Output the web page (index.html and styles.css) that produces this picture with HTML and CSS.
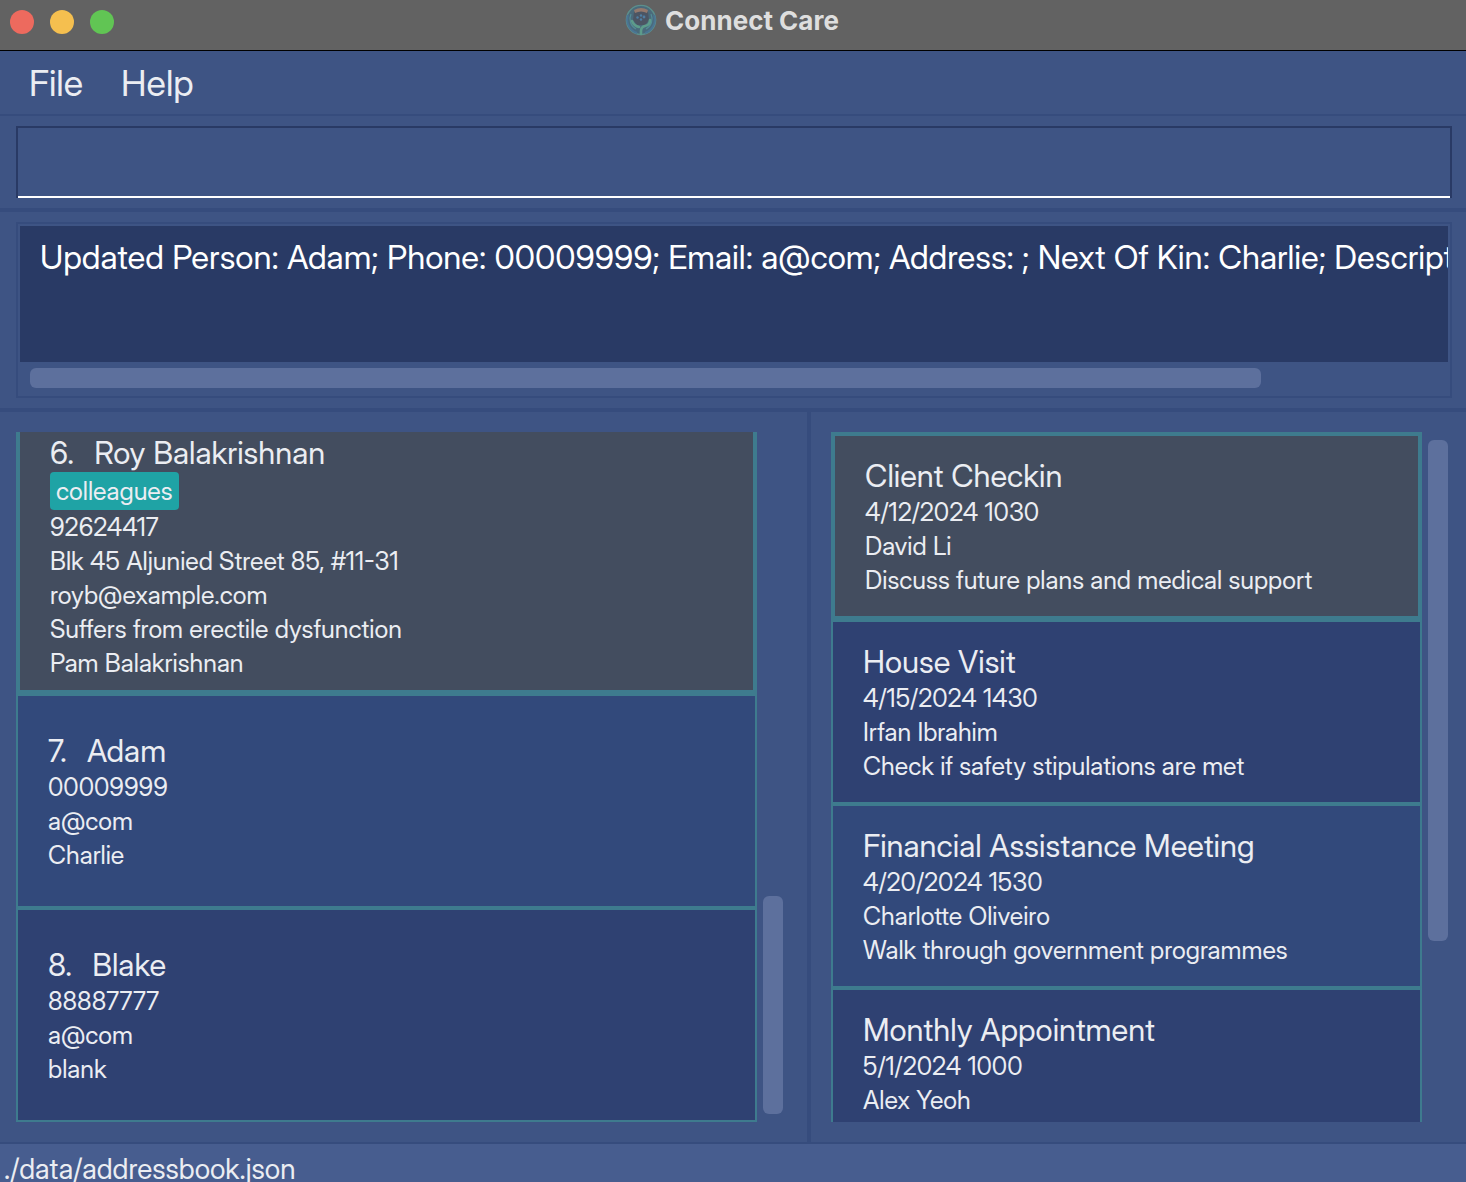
FILE: index.html
```html
<!DOCTYPE html>
<html lang="en">
<head>
<meta charset="utf-8">
<title>Connect Care</title>
<link rel="stylesheet" href="styles.css">
</head>
<body>
<header class="titlebar">
  <div class="window-controls">
    <button class="control control-close" type="button" aria-label="Close"></button>
    <button class="control control-minimize" type="button" aria-label="Minimize"></button>
    <button class="control control-zoom" type="button" aria-label="Zoom"></button>
  </div>
  <h1 class="window-title">
    <svg class="app-icon" viewBox="0 0 32 32" aria-hidden="true">
      <circle cx="16" cy="16" r="15" fill="#4a6a7b"/>
      <circle cx="16" cy="16" r="14.6" fill="none" stroke="#5d8f8c" stroke-width="1.4"/>
      <path d="M3 11a14 14 0 0 0 9 18" fill="none" stroke="#4a7594" stroke-width="2"/>
      <path d="M29 11a14 14 0 0 1-9 18" fill="none" stroke="#4a7594" stroke-width="2"/>
      <path d="M6 10a11.500 11.500 0 0 0 5 15M26 10a11.500 11.500 0 0 1-5 15" fill="none" stroke="#548d97" stroke-width="1.200"/>
      <path d="M9 8q7-4 14 0l1 8-4 5h-8l-4-5z" fill="#4c5563"/>
      <path d="M9 6q7-4 14 0l-1 3q-6-3-12 0z" fill="#94796d"/>
      <path d="M7 17q2 5 7 6M25 16q0 5-5 6-4 1-4 5v3" fill="none" stroke="#5d9c8b" stroke-width="2.600" stroke-linecap="round"/>
      <circle cx="12.500" cy="13.500" r="1.200" fill="#4f7ea3"/>
      <circle cx="19" cy="13" r="1.400" fill="#4f7ea3"/>
      <circle cx="16" cy="11.500" r="1.200" fill="#4f7ea3"/>
      <circle cx="16" cy="15.500" r="1.200" fill="#4f7ea3"/>
    </svg>
    <span>Connect Care</span>
  </h1>
</header>

<nav class="menubar">
  <button class="menu" type="button">File</button>
  <button class="menu" type="button">Help</button>
</nav>

<section class="command">
  <input class="command-input" type="text" aria-label="Command">
</section>

<section class="result">
  <div class="result-frame">
    <textarea class="result-text" aria-label="Result" wrap="off" readonly>Updated Person: Adam; Phone: 00009999; Email: a@com; Address: ; Next Of Kin: Charlie; Description: </textarea>
    <div class="scroll-x"><div class="thumb" style="width: 87.4%"></div></div>
  </div>
</section>

<main class="split">
  <section class="pane pane-persons">
    <ul class="list list-end">
      <li class="card selected">
        <h2 class="card-title"><span class="index">6.</span><span>Roy Balakrishnan</span></h2>
        <p class="tags"><span class="tag">colleagues</span></p>
        <p class="line">92624417</p>
        <p class="line">Blk 45 Aljunied Street 85, #11-31</p>
        <p class="line">royb@example.com</p>
        <p class="line">Suffers from erectile dysfunction</p>
        <p class="line">Pam Balakrishnan</p>
      </li>
      <li class="card odd">
        <h2 class="card-title"><span class="index">7.</span><span>Adam</span></h2>
        <p class="line">00009999</p>
        <p class="line">a@com</p>
        <p class="line">Charlie</p>
      </li>
      <li class="card even">
        <h2 class="card-title"><span class="index">8.</span><span>Blake</span></h2>
        <p class="line">88887777</p>
        <p class="line">a@com</p>
        <p class="line">blank</p>
      </li>
    </ul>
    <div class="scroll-y scroll-end"><div class="thumb" style="height: 32.3%"></div></div>
  </section>
  <div class="divider"></div>
  <section class="pane pane-events">
    <ul class="list">
      <li class="card selected">
        <h2 class="card-title">Client Checkin</h2>
        <p class="line">4/12/2024 1030</p>
        <p class="line">David Li</p>
        <p class="line">Discuss future plans and medical support</p>
      </li>
      <li class="card even">
        <h2 class="card-title">House Visit</h2>
        <p class="line">4/15/2024 1430</p>
        <p class="line">Irfan Ibrahim</p>
        <p class="line">Check if safety stipulations are met</p>
      </li>
      <li class="card odd">
        <h2 class="card-title">Financial Assistance Meeting</h2>
        <p class="line">4/20/2024 1530</p>
        <p class="line">Charlotte Oliveiro</p>
        <p class="line">Walk through government programmes</p>
      </li>
      <li class="card even">
        <h2 class="card-title">Monthly Appointment</h2>
        <p class="line">5/1/2024 1000</p>
        <p class="line">Alex Yeoh</p>
      </li>
    </ul>
    <div class="scroll-y"><div class="thumb" style="height: 74.3%"></div></div>
  </section>
</main>

<footer class="statusbar">./data/addressbook.json</footer>
</body>
</html>
```
FILE: styles.css
```css
:root {
  --bg: #3e5484;
  --line: #364c7d;
  --dark: #293a65;
  --teal: #3e7b8e;
  --thumb: #5d709d;
  --text: #ebedf2;
}

* { box-sizing: border-box; }

body {
  margin: 0;
  height: 100vh;
  display: flex;
  flex-direction: column;
  overflow: hidden;
  background: var(--bg);
  color: var(--text);
  font-family: "Inter Display", Inter, "Liberation Sans", sans-serif;
  font-size: 25px;
  line-height: 34px;
}

h1, h2, p, ul { margin: 0; padding: 0; font-weight: 400; }
ul { list-style: none; }
button, input, textarea { font: inherit; color: inherit; margin: 0; }

.titlebar {
  flex: none;
  display: grid;
  grid-template-columns: 1fr auto 1fr;
  height: 51px;
  padding: 4px 12px 0 10px;
  background: #626262;
  border-bottom: 1px solid #000;
}

.window-controls { display: flex; gap: 16px; padding-top: 6px; }

.control {
  width: 24px;
  height: 24px;
  padding: 0;
  border: 0;
  border-radius: 50%;
}
.control-close { background: #ed6a5e; }
.control-minimize { background: #f5bf4f; }
.control-zoom { background: #61c554; }

.window-title {
  display: flex;
  gap: 8px;
  height: 34px;
  color: #dedede;
  font-family: Inter, "Liberation Sans", sans-serif;
  font-size: 26px;
  font-weight: 700;
}
.app-icon { width: 32px; height: 32px; }

.menubar {
  flex: none;
  display: flex;
  height: 65px;
  padding: 0 10px;
  border-bottom: 2px solid var(--line);
}
.menu {
  padding: 0 19px;
  border: 0;
  background: none;
  font-size: 36px;
}

.command {
  flex: none;
  padding: 10px 14px 10px 16px;
  border-bottom: 4px solid var(--line);
}
.command-input {
  display: block;
  width: 100%;
  height: 72px;
  padding: 0 16px;
  border: 2px solid var(--dark);
  border-bottom: 0;
  box-shadow: inset 0 -2px #fff;
  background: none;
  font-size: 33px;
  outline: 0;
}

.result {
  flex: none;
  padding: 10px 14px 10px 16px;
  border-bottom: 4px solid var(--line);
}
.result-frame {
  padding: 2px;
  border: 2px solid var(--line);
}
.result-text {
  display: block;
  width: 100%;
  height: 136px;
  padding: 10px 20px;
  border: 0;
  background: var(--dark);
  color: #fff;
  font-size: 33px;
  line-height: 42px;
  resize: none;
  overflow: hidden;
  outline: 0;
}

.thumb { background: var(--thumb); border-radius: 6px; }
.scroll-x { padding: 6px 10px; }
.scroll-x .thumb { height: 20px; }
.scroll-y {
  flex: none;
  display: flex;
  flex-direction: column;
  width: 20px;
  padding: 8px 0;
}
.scroll-end { justify-content: flex-end; }

.split {
  flex: 1;
  min-height: 0;
  display: grid;
  grid-template-columns: 552fr 4px 448fr;
  grid-template-rows: 100%;
}
.divider { background: var(--line); }

.pane {
  display: flex;
  gap: 6px;
  min-width: 0;
  padding-top: 20px;
  padding-bottom: 20px;
}
.pane-persons { padding-left: 16px; padding-right: 24px; }
.pane-events { padding-left: 20px; padding-right: 18px; }

.list {
  flex: 1;
  min-width: 0;
  display: flex;
  flex-direction: column;
  overflow: hidden;
}
.list-end { justify-content: flex-end; }

.card {
  flex: none;
  min-height: 184px;
  padding: 21px 30px 19px;
  border: 2px solid var(--teal);
  white-space: nowrap;
}
.pane-persons .card {
  display: flex;
  flex-direction: column;
  justify-content: center;
  min-height: 214px;
  padding: 12px 30px 10px;
}
.pane-persons .card.selected { padding-top: 10px; }
.card.selected { background: #434d5f; border-width: 4px; }
.card.odd { background: #32497b; }
.card.even { background: #2f4172; }

.card-title {
  display: flex;
  gap: 20px;
  font-size: 31px;
  line-height: 38px;
}
.tags { display: flex; }
.tag {
  padding: 2px 6px;
  border-radius: 4px;
  background: #1fa3a5;
}

.statusbar {
  flex: none;
  height: 40px;
  padding: 8px 4px 0;
  border-top: 2px solid var(--line);
  background: #475d8f;
  font-size: 28px;
}
```
